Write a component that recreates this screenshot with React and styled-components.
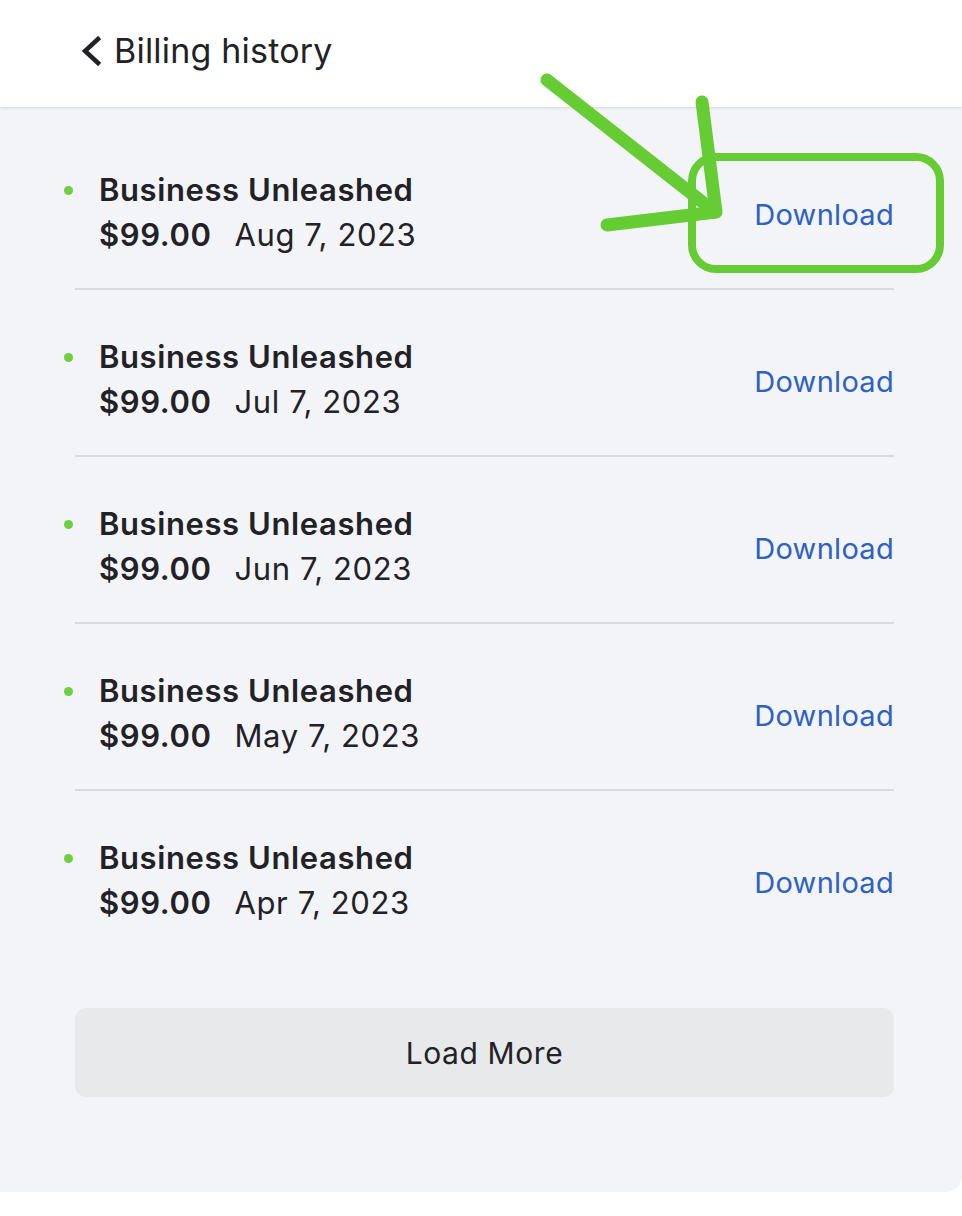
import styled, { createGlobalStyle } from 'styled-components'

const GlobalStyle = createGlobalStyle`
  body {
    margin: 0;
    background: #ffffff;
    font-family: Inter, "Noto Sans", sans-serif;
    color: #222226;
  }
`

const Page = styled.div`
  position: relative;
  width: 962px;
  min-height: 1216px;
  background: #ffffff;
  overflow: hidden;
`

const Header = styled.div`
  position: relative;
  z-index: 1;
  height: 107px;
  display: flex;
  align-items: center;
  padding-left: 80px;
  padding-bottom: 6px;
  box-sizing: border-box;
  background: #ffffff;
  box-shadow: 0 1px 3px rgba(0, 0, 0, 0.12);
`

const Title = styled.h1`
  margin: 0 0 0 12px;
  font-size: 34px;
  font-weight: 400;
  letter-spacing: 0.2px;
  color: #222226;
`

const Panel = styled.div`
  background: #f3f4f8;
  border-bottom-right-radius: 16px;
  padding: 16px 0 95px;
`

const Row = styled.div`
  display: flex;
  align-items: center;
  padding: 44px 68px 31px 64px;
`

const Dot = styled.span`
  width: 9px;
  height: 9px;
  border-radius: 50%;
  background: #6fcf3f;
  margin-right: 26px;
  align-self: flex-start;
  margin-top: 19px;
`

const Info = styled.div`
  flex: 1;
  font-size: 31px;
  line-height: 45px;
  letter-spacing: 0.6px;
`

const Plan = styled.div`
  font-weight: 600;
`

const Meta = styled.div`
  display: flex;
  gap: 23px;
`

const Amount = styled.span`
  font-weight: 600;
`

const DownloadLink = styled.a`
  font-size: 29px;
  letter-spacing: 0.3px;
  color: #2d61c2;
  text-decoration: none;
  margin-top: 4px;
`

const Divider = styled.div`
  height: 2px;
  background: #d9dade;
  margin: 0 68px 0 75px;
`

const LoadMore = styled.button`
  display: block;
  width: calc(100% - 143px);
  height: 89px;
  margin: 52px 68px 0 75px;
  border: none;
  border-radius: 10px;
  background: #e8e9eb;
  font-family: Inter, "Noto Sans", sans-serif;
  font-size: 30px;
  letter-spacing: 0.6px;
  color: #222226;
`

const Corner = styled.div`
  position: absolute;
  top: -14px;
  right: -28px;
  width: 40px;
  height: 40px;
  border-radius: 50%;
  background: #2a2a30;
`

const Annotation = styled.svg`
  position: absolute;
  top: 0;
  left: 0;
  z-index: 2;
  pointer-events: none;
`

const Back = () => (
  <svg width="22" height="30" viewBox="0 0 22 30">
    <polyline points="18,3 5,15 18,27" fill="none" stroke="#222226" strokeWidth="4.5" strokeLinecap="square" strokeLinejoin="miter" />
  </svg>
)

const bills = ['Aug 7, 2023', 'Jul 7, 2023', 'Jun 7, 2023', 'May 7, 2023', 'Apr 7, 2023']

const App = () => (
  <Page>
    <GlobalStyle />
    <Header>
      <Back />
      <Title>Billing history</Title>
    </Header>
    <Panel>
      {bills.map((date, i) => (
        <div key={date}>
          {i > 0 && <Divider />}
          <Row>
            <Dot />
            <Info>
              <Plan>Business Unleashed</Plan>
              <Meta>
                <Amount>$99.00</Amount>
                <span>{date}</span>
              </Meta>
            </Info>
            <DownloadLink href="#">Download</DownloadLink>
          </Row>
        </div>
      ))}
      <LoadMore>Load More</LoadMore>
    </Panel>
    <Corner />
    <Annotation width="962" height="1216">
      <rect x="692" y="157" width="248" height="112" rx="24" fill="none" stroke="#66cc33" strokeWidth="8" />
      <g stroke="#66cc33" strokeWidth="13" strokeLinecap="round" strokeLinejoin="round" fill="none">
        <line x1="547" y1="80" x2="715" y2="212" />
        <polyline points="702,102 716,212 607,225" />
      </g>
    </Annotation>
  </Page>
)

export default App
